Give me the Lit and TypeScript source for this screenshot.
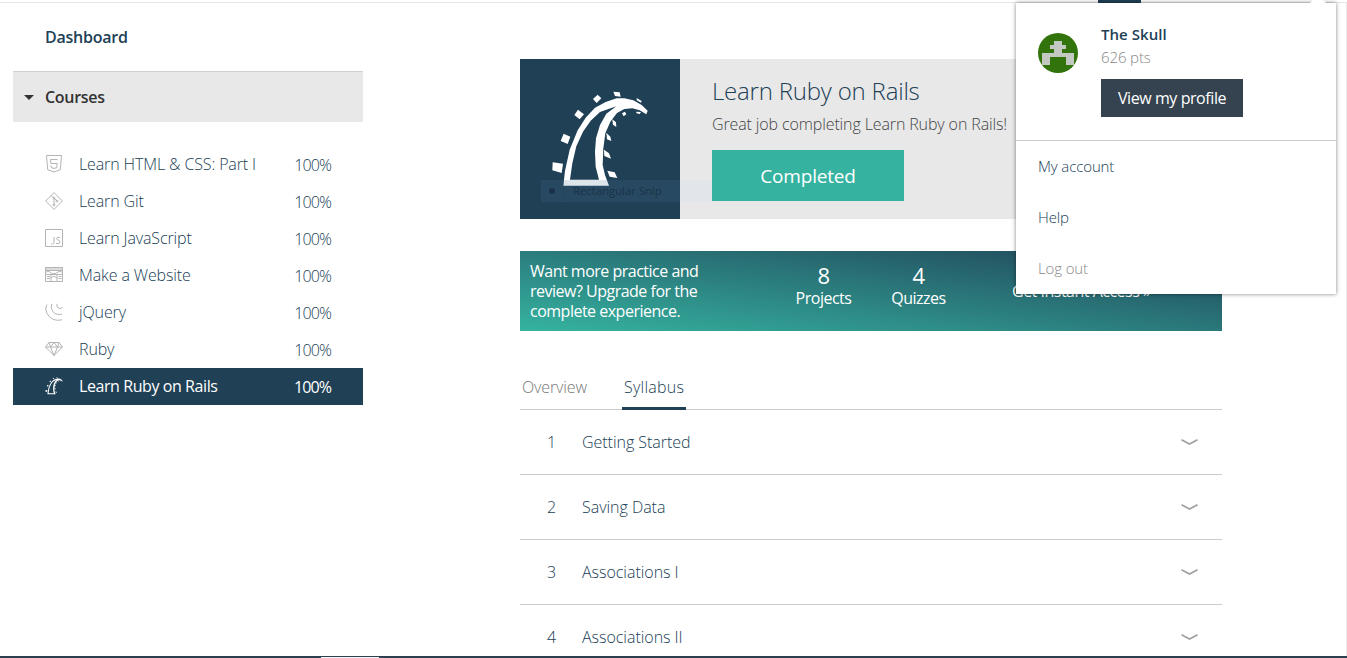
import { LitElement, html, svg, css } from "lit";
import { customElement } from "lit/decorators.js";

const ico = (body: unknown) => html`<svg class="ico" viewBox="0 0 18 18" width="18" height="18">${body}</svg>`;

const rails = svg`
  <g transform="translate(25 26) scale(.3333)" fill="#fff">
    <path fill-rule="evenodd" d="M55 302 60 258 74 194 98 136 122 98 150 68 182 51 215 40 238 40 265 46 290 60 308 77 304 88 284 76 262 70 238 72 216 84 196 110 181 145 175 190 173 240 180 270 192 302Z M75 284 162 284 152 245 150 200 153 160 165 120 184 86 214 64 165 81 137 107 114 140 94 184 82 235Z"/>
    <path d="M23 232 54 236 50 264 22 256ZM56 146 76 155 68 177 47 168ZM99 74 117 88 104 103 88 90ZM158 29 169 40 155 54 144 42ZM205 20 224 22 227 35 210 33ZM275 39 290 48 288 53 275 46ZM231 85 240 80 244 88 236 94ZM202 103 213 112 214 126 204 119ZM184 143 196 155 199 168 186 163ZM177 194 192 205 198 221 178 213ZM187 257 209 262 217 279 194 275ZM273 80 288 81 284 87 275 85Z"/>
  </g>`;

const icons = {
  html: ico(svg`<path d="M1.500 .5h15l-1.200 14.200L9 17 2.700 14.700z"/><path d="M12.500 4.500h-7l.3 4h6.400l-.4 4-2.800 1-2.800-1-.2-2"/>`),
  git: ico(svg`<path d="M9 .6 17.400 9 9 17.400.6 9z"/><path d="M6 3.500 9 6.500V13M9 6l3 3"/><circle cx="9" cy="6" r=".9"/><circle cx="9" cy="13" r=".9"/><circle cx="12" cy="9" r=".9"/>`),
  js: ico(svg`<path d="M.5 .5h17v17H.5z"/><path d="M9 8v5.500q0 1.500-1.500 1.500H6M15 8.500q-3.500-1-3.500 1 0 1 1.700 1.500t1.800 2q0 2.500-4 1.500"/>`),
  site: ico(svg`<path fill="#dcdcdc" d="M.5 1.500h17v3H.5z"/><path d="M.5 1.500h17v14H.5zM.5 6 4 5.500q4 4.500 10 0l3.500.5M.5 8.500h17M6 8.500v7M12 8.500v7M6 12l3-2 3 2M2 10.500h3M2 12.500h3M13.500 10.500h3M13.500 12.500h3"/>`),
  jquery: ico(svg`<path d="M1.800 1.500Q-.5 6 2 10.500t6.500 6 8.500.3M6.800 .8Q5 5 8 8.700t9 2.500M12.200 .8q-1 2.500 .8 4t4.500-.3"/>`),
  ruby: ico(svg`<path d="M4 2.500h10L17.500 7 9 15.500.5 7zM.5 7h17M4 2.500 5.500 7 9 15.500 12.500 7 14 2.500M5.500 7 9 2.500 12.500 7"/>`),
  rails: html`<svg class="ico" viewBox="30 31 100 100" width="18" height="18">${rails}</svg>`,
};

const courses: [keyof typeof icons, string][] = [
  ["html", "Learn HTML & CSS: Part I"],
  ["git", "Learn Git"],
  ["js", "Learn JavaScript"],
  ["site", "Make a Website"],
  ["jquery", "jQuery"],
  ["ruby", "Ruby"],
  ["rails", "Learn Ruby on Rails"],
];
const units = ["Getting Started", "Saving Data", "Associations I", "Associations II"];

@customElement("app-root")
export class AppRoot extends LitElement {
  static styles = css`
    :host { display: block; position: relative; box-sizing: border-box; width: 1347px; height: 658px; overflow: hidden; background: #fff; color: #204056; font: 300 16px/20px "Open Sans", "Noto Sans", sans-serif; letter-spacing: -0.12px; }
    * { box-sizing: border-box; }
    .page { height: 656px; margin-top: 2px; border-top: 1px solid #e6e6e6; border-right: 1px solid #e9e9e9; overflow: hidden; display: grid; grid-template-columns: 350px 702px; column-gap: 157px; padding-left: 13px; align-items: start; }
    .dash { padding: 24px 32px 0; height: 68px; font-weight: 600; letter-spacing: -0.25px; }
    .courses { height: 51px; border-top: 1px solid #ccd3d0; background: #e8e8e8; color: #333; font-weight: 600; letter-spacing: -0.3px; display: flex; align-items: center; gap: 11px; padding-left: 11px; }
    .list { padding-top: 24px; }
    .row { height: 37px; display: flex; align-items: center; padding: 0 32px 2px; }
    .row.on { background: #204056; color: #fff; font-weight: 400; letter-spacing: -0.42px; }
    .ico { flex: none; margin-right: 16px; fill: none; stroke: #b4b4b4; stroke-width: 1; }
    .on .ico { stroke: none; }
    .row .name { flex: 1; white-space: nowrap; }
    .row .pct { padding-top: 2px; letter-spacing: -0.9px; }
    .banner { margin-top: 56px; height: 160px; display: flex; background: #e8e8e8; }
    .art { width: 160px; height: 160px; background: #204056; }
    .btext { padding: 16px 0 0 32px; }
    .title { font-size: 24px; line-height: 32px; white-space: nowrap; letter-spacing: -0.2px; }
    .sub { color: #444; line-height: 24px; margin-top: 5px; white-space: nowrap; }
    .done { width: 192px; height: 51px; margin-top: 14px; background: #35b3a0; color: #fff; font-weight: 400; font-size: 19px; display: grid; place-items: center; letter-spacing: -0.2px; }
    .promo { margin-top: 32px; height: 80px; display: flex; padding: 10px; color: #fff; font-weight: 400; background: linear-gradient(7deg, #35b3a0 0%, #204056 102%); letter-spacing: -0.5px; }
    .pitch { width: 252px; white-space: nowrap; }
    .stat { width: 83px; text-align: center; padding-top: 3px; margin-right: 12px; line-height: 24px; }
    .num { display: block; font-size: 22px; line-height: 22px; }
    .get { padding-top: 20px; margin-left: 40px; white-space: nowrap; }
    .tabs { margin-top: 46px; height: 33px; border-bottom: 1px solid #ccc; display: flex; padding: 0 2px; }
    .tab { width: 66px; color: #777; height: 33px; margin-right: 34px; }
    .tab.on { color: #204056; border-bottom: 3px solid #204056; padding: 0 2px; width: 64px; letter-spacing: 0.25px; }
    .unit { height: 65px; border-bottom: 1px solid #ccc; display: flex; align-items: center; padding-right: 24px; }
    .no { width: 62px; padding-left: 27px; }
    .uname { flex: 1; letter-spacing: -0.03px; }
    .bottom { position: absolute; left: 0; right: 0; bottom: 0; height: 2px; background: #2b3f4e; }
    .white { position: absolute; left: 321px; bottom: 0; width: 58px; height: 1px; background: #f7f4fa; }
    .mark { position: absolute; left: 1098px; top: 0; width: 43px; height: 3px; background: #204056; }
    .menu { position: absolute; left: 1016px; top: 3px; width: 320px; height: 291px; background: #fff; box-shadow: 0 0 4px rgba(0,0,0,.5); font-size: 15px; }
    .notch { position: absolute; left: 1309px; top: 0; width: 18px; height: 4px; background: #fff; clip-path: polygon(4px 0, 14px 0, 18px 4px, 0 4px); }
    .user { height: 138px; border-bottom: 1px solid #ccc; padding: 21px 22px 0; display: flex; align-items: flex-start; gap: 23px; }
    .avatar { margin-top: 9px; }
    .who { font-weight: 600; letter-spacing: 0.05px; }
    .pts { color: #888; margin-top: 3px; }
    .view { width: 142px; height: 38px; margin-top: 12px; background: #34434f; color: #fff; font-size: 16px; font-weight: 400; display: grid; place-items: center; letter-spacing: -0.42px; }
    .item { display: block; height: 51px; padding: 15px 22px 0; }
    .item.out { color: #888; }
    .snip { position: absolute; left: 541px; top: 180px; width: 171px; height: 22px; background: linear-gradient(90deg, rgba(70,112,145,.18) 139px, rgba(220,228,238,.5) 139px); display: grid; grid-template-columns: 22px 1fr; align-items: center; font: 11.500px/20px "Open Sans", sans-serif; letter-spacing: -0.1px; color: rgba(12,30,48,.5); }
    .dot { width: 6px; height: 6px; border-radius: 3px; margin-left: 8px; background: rgba(12,30,48,.5); }
    .sniptext { border-left: 1px solid rgba(12,30,48,.1); padding-left: 9px; }
  `;

  render() {
    return html`
      <div class="page">
        <nav>
          <div class="dash"><span>Dashboard</span></div>
          <div class="courses"><svg width="10" height="5" viewBox="0 0 10 5"><path d="M0 0h10L5 5z" fill="#333"/></svg><span>Courses</span></div>
          <div class="list">
            ${courses.map(([i, n]) => html`<div class="row ${i === "rails" ? "on" : ""}">${icons[i]}<div class="name"><span>${n}</span></div><span class="pct">100%</span></div>`)}
          </div>
        </nav>
        <main>
          <section class="banner">
            <svg class="art" viewBox="0 0 160 160">${rails}</svg>
            <div class="btext">
              <div class="title"><span>Learn Ruby on Rails</span></div>
              <div class="sub"><span>Great job completing Learn Ruby on Rails!</span></div>
              <div class="done"><span>Completed</span></div>
            </div>
          </section>
          <section class="promo">
            <div class="pitch">Want more practice and<br>review? Upgrade for the<br>complete experience.</div>
            <div class="stat"><span class="num">8</span>Projects</div>
            <div class="stat"><span class="num">4</span>Quizzes</div>
            <div class="get">Get Instant Access »</div>
          </section>
          <div class="tabs"><div class="tab">Overview</div><div class="tab on">Syllabus</div></div>
          ${units.map((u, i) => html`<div class="unit"><span class="no">${i + 1}</span><span class="uname">${u}</span><svg width="17" height="6" viewBox="0 0 17 6"><path d="M.5 .8 8.500 5l8-4.200" fill="none" stroke="#a0a0a0" stroke-width="1.700"/></svg></div>`)}
        </main>
      </div>
      <div class="snip"><span class="dot"></span><span class="sniptext">Rectangular Snip</span></div>
      <div class="bottom"></div><div class="white"></div>
      <div class="mark"></div>
      <div class="menu">
        <div class="user">
          <svg class="avatar" width="40" height="40" viewBox="0 0 40 40"><circle cx="20" cy="20" r="20" fill="#32730b"/><path fill="#c3c9c2" d="M16 8h8v4h4v4h-4v4h12v12h-8v-8H12v8H4V20h12v-4h-4v-4h4z"/></svg>
          <div>
            <div class="who"><span>The Skull</span></div>
            <div class="pts"><span>626 pts</span></div>
            <div class="view"><span>View my profile</span></div>
          </div>
        </div>
        <div class="item"><span>My account</span></div>
        <div class="item"><span>Help</span></div>
        <div class="item out"><span>Log out</span></div>
      </div>
      <div class="notch"></div>
    `;
  }
}
